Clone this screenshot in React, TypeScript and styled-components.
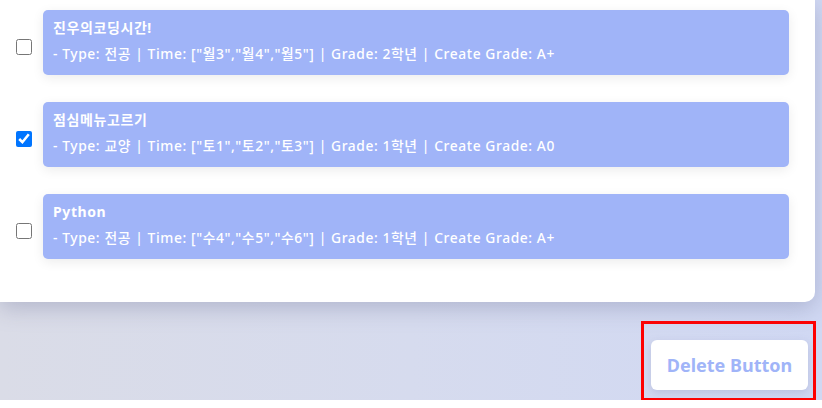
import React, { useState } from "react";
import styled, { createGlobalStyle } from "styled-components";

const GlobalStyle = createGlobalStyle`
  body {
    margin: 0;
    background: #fff;
    font-family: "Noto Sans", "Noto Sans CJK KR", sans-serif;
  }
`;

type Lecture = {
  id: number;
  title: string;
  type: string;
  time: string[];
  grade: string;
  createGrade: string;
};

const lectures: Lecture[] = [
  { id: 1, title: "진우의코딩시간!", type: "전공", time: ["월3", "월4", "월5"], grade: "2학년", createGrade: "A+" },
  { id: 2, title: "점심메뉴고르기", type: "교양", time: ["토1", "토2", "토3"], grade: "1학년", createGrade: "A0" },
  { id: 3, title: "Python", type: "전공", time: ["수4", "수5", "수6"], grade: "1학년", createGrade: "A+" },
];

export default function App() {
  const [checked, setChecked] = useState<number[]>([2]);

  const toggle = (id: number) =>
    setChecked((prev) => (prev.includes(id) ? prev.filter((v) => v !== id) : [...prev, id]));

  return (
    <>
      <GlobalStyle />
      <Page>
        <Panel>
          {lectures.map((l) => (
            <Row key={l.id}>
              <Check type="checkbox" checked={checked.includes(l.id)} onChange={() => toggle(l.id)} />
              <Card>
                <Title>{l.title}</Title>
                <Info>
                  - Type: {l.type} | Time: {JSON.stringify(l.time)} | Grade: {l.grade} | Create Grade: {l.createGrade}
                </Info>
              </Card>
            </Row>
          ))}
        </Panel>
        <Footer>
          <Highlight>
            <DeleteButton>Delete Button</DeleteButton>
          </Highlight>
        </Footer>
      </Page>
    </>
  );
}

const Page = styled.div`
  height: 400px;
  background: linear-gradient(90deg, #dadce7 0%, #d6dbee 50%, #d0d8f3 100%);
`;

const Panel = styled.div`
  width: 815px;
  height: 302px;
  box-sizing: border-box;
  padding-top: 10px;
  background: #fff;
  border-radius: 0 0 10px 0;
  box-shadow: 0 6px 22px rgba(120, 125, 160, 0.4);
  display: flex;
  flex-direction: column;
  gap: 27px;
  position: relative;
`;

const Row = styled.div`
  display: flex;
  align-items: center;
`;

const Check = styled.input`
  width: 16px;
  height: 16px;
  margin: 8px 11px 0 16px;
`;

const Card = styled.div`
  width: 746px;
  height: 65px;
  box-sizing: border-box;
  padding: 9px 10px 0;
  background: #a0b4f8;
  border-radius: 5px;
  box-shadow: 0 3px 12px rgba(0, 0, 0, 0.08);
  color: #fff;
`;

const Title = styled.div`
  font-size: 14px;
  font-weight: 700;
  line-height: 18px;
  letter-spacing: 0.6px;
`;

const Info = styled.div`
  margin-top: 8px;
  font-size: 13.8px;
  font-weight: 500;
  line-height: 18px;
  letter-spacing: 0.6px;
`;

const Footer = styled.div`
  display: flex;
  justify-content: flex-end;
  padding: 19px 6px 0 0;
`;

const Highlight = styled.div`
  width: 175px;
  height: 80px;
  box-sizing: border-box;
  border: 3px solid #ff0000;
  padding: 16px 5px 8px 7px;
`;

const DeleteButton = styled.button`
  width: 157px;
  height: 50px;
  border: none;
  border-radius: 6px;
  background: #fff;
  box-shadow: 0 3px 8px rgba(120, 125, 170, 0.25);
  color: #a0b4f8;
  font-family: "Noto Sans", sans-serif;
  font-size: 18px;
  font-weight: 700;
  cursor: pointer;
`;
